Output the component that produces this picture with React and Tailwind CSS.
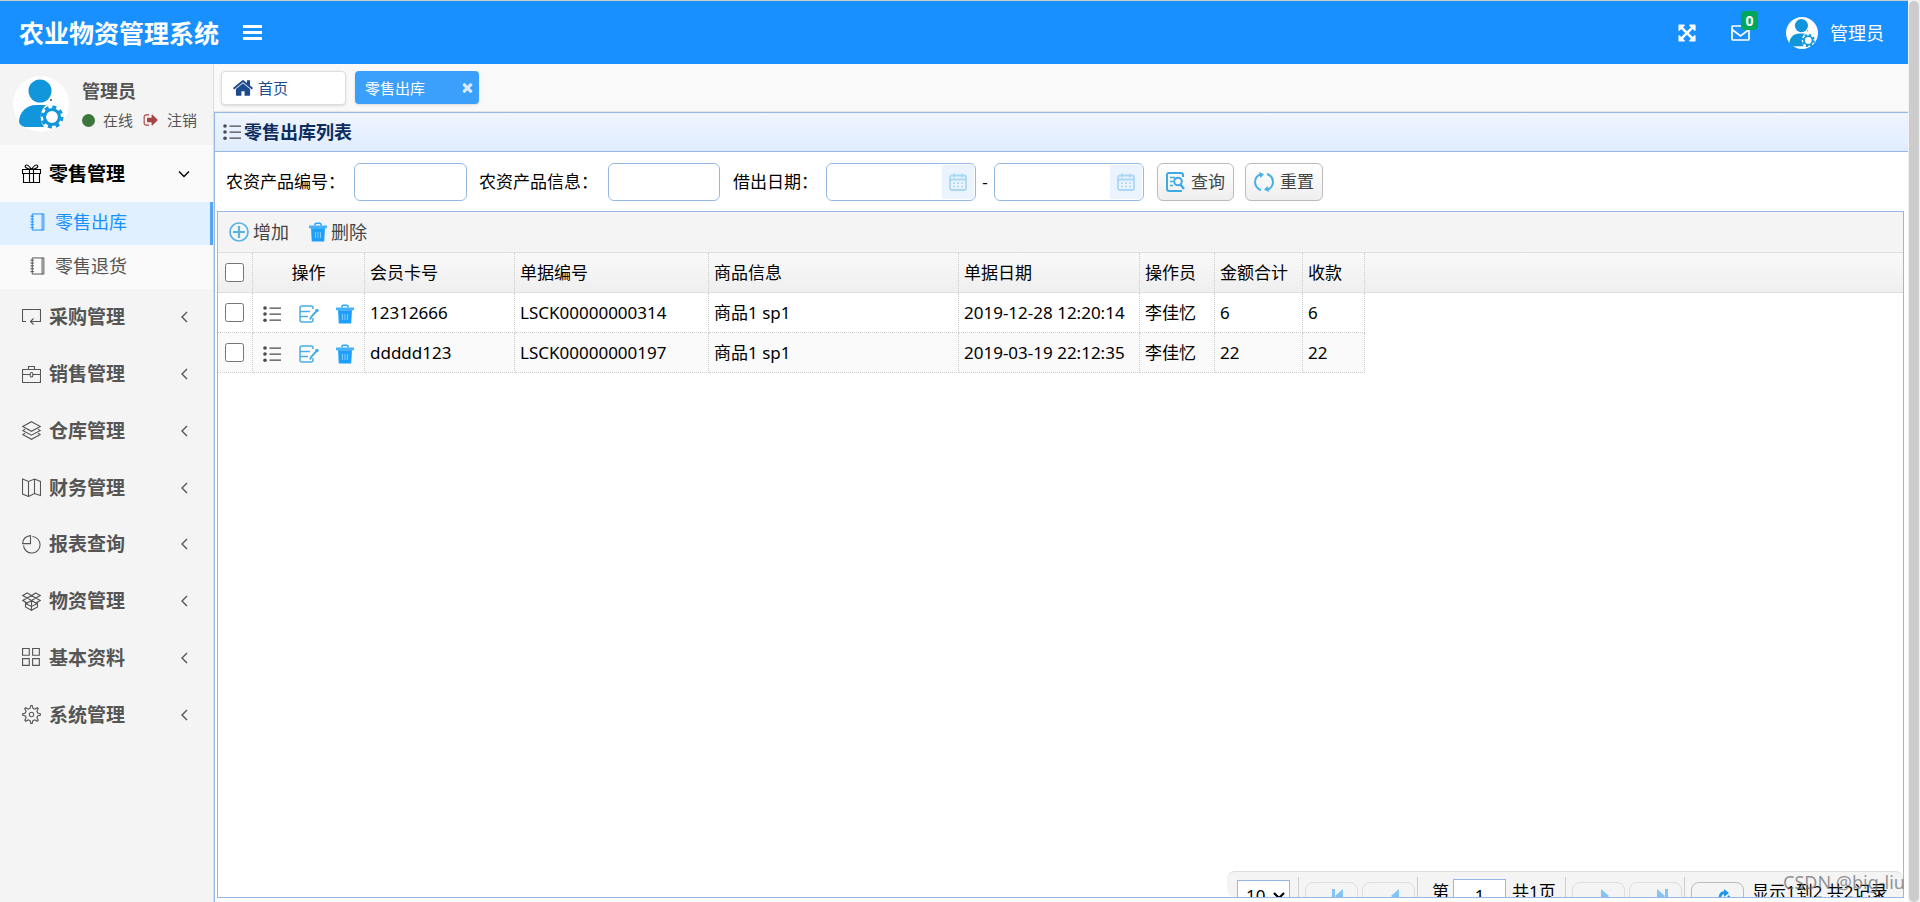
import React, { useState } from 'react';
import { TfiLayoutGrid2, TfiSettings } from 'react-icons/tfi';

const columns = ['会员卡号', '单据编号', '商品信息', '单据日期', '操作员', '金额合计', '收款'];

const rows = [
    ['12312666', 'LSCK00000000314', '商品1 sp1', '2019-12-28 12:20:14', '李佳忆', '6', '6'],
    ['ddddd123', 'LSCK00000000197', '商品1 sp1', '2019-03-19 22:12:35', '李佳忆', '22', '22'],
];

function Solid({ d, className }) {
    return (
        <svg viewBox="0 0 1792 1792" fill="currentColor" className={className} aria-hidden="true">
            <path d={d} />
        </svg>
    );
}

const HOME = 'M1472 992v480q0 26-19 45t-45 19h-384v-384h-256v384h-384q-26 0-45-19t-19-45v-480q0-1 .5-3t.5-3l575-474 575 474q1 2 1 6zm223-69l-62 74q-8 9-21 11h-3q-13 0-21-7l-692-577-692 577q-12 8-24 7-13-2-21-11l-62-74q-8-10-7-23.5t11-21.5l719-599q32-26 76-26t76 26l244 204v-195q0-14 9-23t23-9h192q14 0 23 9t9 23v408l219 182q10 8 11 21.5t-7 23.5z';
const SIGN_OUT = 'M704 1440q0 4 1 20t.5 26.5-3 23.5-10 19.5-20.5 6.5h-320q-119 0-203.5-84.5t-84.5-203.5v-704q0-119 84.5-203.5t203.5-84.5h320q13 0 22.5 9.5t9.5 22.5q0 4 1 20t.5 26.5-3 23.5-10 19.5-20.5 6.5h-320q-66 0-113 47t-47 113v704q0 66 47 113t113 47h312l11.5 1 11.5 3 8 5.5 7 9 2 13.5zm928-544q0 26-19 45l-544 544q-19 19-45 19t-45-19-19-45v-288h-448q-26 0-45-19t-19-45v-384q0-26 19-45t45-19h448v-288q0-26 19-45t45-19 45 19l544 544q19 19 19 45z';
const TIMES = 'M1490 1322q0 40-28 68l-136 136q-28 28-68 28t-68-28l-294-294-294 294q-28 28-68 28t-68-28l-136-136q-28-28-28-68t28-68l294-294-294-294q-28-28-28-68t28-68l136-136q28-28 68-28t68 28l294 294 294-294q28-28 68-28t68 28l136 136q28 28 28 68t-28 68l-294 294 294 294q28 28 28 68z';
const ARROWS = 'M1411 541l-355 355 355 355 144-144q29-31 70-14 39 17 39 59v448q0 26-19 45t-45 19h-448q-42 0-59-40-17-39 14-69l144-144-355-355-355 355 144 144q31 30 14 69-17 40-59 40h-448q-26 0-45-19t-19-45v-448q0-42 40-59 39-17 69 14l144 144 355-355-355-355-144 144q-19 19-45 19-12 0-24-5-40-17-40-59v-448q0-26 19-45t45-19h448q42 0 59 40 17 39-14 69l-144 144 355 355 355-355-144-144q-31-30-14-69 17-40 59-40h448q26 0 45 19t19 45v448q0 42-39 59-13 5-25 5-26 0-45-19z';

// thin outline icons on a 19px grid
function Line({ d, children, className = 'h-[19px] w-[19px]' }) {
    return (
        <svg viewBox="0 0 19 19" fill="none" stroke="currentColor" strokeWidth="1.1" className={className} aria-hidden="true">
            {d && <path d={d} />}
            {children}
        </svg>
    );
}

const GiftIcon = () => (
    <Line d="M.5 5.500h18v4H.5zM1.500 9.500v9h16v-9M7.500 5.500v13M11.500 5.500v13M9.500 5.500C7 1 4.500 .3 3.500 1.500S4 5 9.500 5.500C15 5 16.500 2.700 15.500 1.500S12 1 9.500 5.500" />
);
const ReturnIcon = () => (
    <Line d="M4 13.500H.5v-12h18v12h-10M11.500 10.500l-3 3 3 3" />
);
const CaseIcon = () => (
    <Line d="M.5 4.500h18v13H.5zM6.500 4.500v-3h6v3M.5 9.500H8M11 9.500h7.500">
        <rect x="8.200" y="7.500" width="2.600" height="4.500" rx="1.300" />
    </Line>
);
const LayersIcon = () => (
    <Line d="M9.500 .7L18.300 5.500 9.500 10.300.7 5.500zM3 8.200L.7 9.600l8.800 4.600 8.800-4.600L16 8.200M3 12.200L.7 13.600l8.800 4.700 8.800-4.700-2.300-1.400" />
);
const MapIcon = () => (
    <Line d="M.5 1L6.500 3.500l6-2.500 6 2.500v14l-6-2-6 3-6-2.500zM6.500 3.500v15M12.500 1v14.500" />
);
const PieIcon = () => (
    <Line d="M8.500 .6v8H.6Q1 1.500 8.500 .6zM10.500 1.500a8.300 8.300 0 1 1-9 9" />
);
const BoxesIcon = () => (
    <Line d="M5.200 1L9.500 3.500 5.200 6 .8 3.500zM13.800 1l4.400 2.500L13.800 6 9.500 3.500zM5.200 6l4.300 2.500-4.300 2.500L.8 8.500zM13.800 6l4.400 2.500-4.400 2.500-4.300-2.500zM3.500 10.500v4.500l6 3.300 6-3.300v-4.500M9.500 8.500v9.800M3.500 11.500l6 3 6-3" />
);

function BookIcon() {
    return (
        <Line className="h-[18px] w-[17px]" d="M2.500 .5h13v18h-13zM13.500 .5v18M.5 3h4M.5 6.200h4M.5 9.400h4M.5 12.600h4M.5 15.800h4" />
    );
}

const menus = [
    { name: '采购管理', Icon: ReturnIcon },
    { name: '销售管理', Icon: CaseIcon },
    { name: '仓库管理', Icon: LayersIcon },
    { name: '财务管理', Icon: MapIcon },
    { name: '报表查询', Icon: PieIcon },
    { name: '物资管理', Icon: BoxesIcon },
    { name: '基本资料', Icon: TfiLayoutGrid2 },
    { name: '系统管理', Icon: TfiSettings },
];

function Avatar({ className }) {
    return (
        <svg viewBox="0 0 56 56" className={className} aria-hidden="true">
            <circle cx="28" cy="28" r="28" fill="#fff" />
            <circle cx="27" cy="15" r="11.5" fill="#1296db" />
            <path d="M6 46c0-10 8-17 17-17h10c-5 5-8 12-2 22H12q-5-1-6-5z" fill="#1296db" />
            <circle cx="39" cy="41" r="11" fill="#fff" />
            <circle cx="39" cy="41" r="7.500" fill="none" stroke="#1296db" strokeWidth="3.200" />
            <circle cx="39" cy="41" r="10" fill="none" stroke="#1296db" strokeWidth="3" strokeDasharray="4 3.854" />
            <circle cx="38" cy="24" r="1" fill="#444" />
        </svg>
    );
}

function ListIcon({ className }) {
    return (
        <svg viewBox="0 0 18 18" className={className} aria-hidden="true">
            <g fill="#4a4a4a">
                <circle cx="2" cy="3" r="1.8" />
                <circle cx="2" cy="9" r="1.8" />
                <circle cx="2" cy="15.2" r="1.8" />
                <path d="M6.5 2.4H18v1.3H6.500zM6.500 8.400H18v1.300H6.500zM6.500 14.500H18v1.300H6.500z" />
            </g>
        </svg>
    );
}

function EditIcon({ className }) {
    return (
        <svg viewBox="0 0 20 18" fill="none" stroke="#49aee4" strokeWidth="1.5" className={className} aria-hidden="true">
            <path d="M14 4V3q0-2-2-2H3Q1 1 1 3v12q0 2 2 2h9q2 0 2-2v-2" />
            <path d="M1 6.500h10M1 11.500h8" />
            <path d="M18 5.500l-5.500 6-1.500 3" strokeWidth="2" />
            <circle cx="18" cy="5.500" r="1.800" fill="#49aee4" stroke="none" />
        </svg>
    );
}

function TrashIcon({ className }) {
    return (
        <svg viewBox="0 0 18 20" className={className} aria-hidden="true">
            <path d="M6 3.500V2.500q0-1.300 1.300-1.300h3.400q1.300 0 1.300 1.300v1" fill="none" stroke="#2ba6fb" strokeWidth="1.600" />
            <path d="M0 3.500h18v2.800H0z" fill="#46b2fb" />
            <path d="M2 6.300h14l-.8 13.200H2.800z" fill="#1ea0fa" />
            <path d="M6.500 10v6M9 10v6M11.500 10v6" stroke="#7cc8ff" strokeWidth="1.100" />
        </svg>
    );
}

function AddIcon({ className }) {
    return (
        <svg viewBox="0 0 20 20" fill="none" stroke="#58b4e0" className={className} aria-hidden="true">
            <circle cx="10" cy="10" r="9" strokeWidth="1.700" />
            <path d="M10 4v12M4 10h12" strokeWidth="2.200" />
        </svg>
    );
}

function CalendarIcon({ className }) {
    return (
        <svg viewBox="0 0 18 18" fill="none" stroke="#a9d8f5" className={className} aria-hidden="true">
            <rect x="1" y="2.500" width="16" height="14.500" rx="2" strokeWidth="1.800" />
            <path d="M1 6.500h16M5 .5v4M13 .5v4" strokeWidth="1.800" />
            <path d="M4 10.200h10M4 13.500h10" strokeWidth="1.500" strokeDasharray="2 2" />
        </svg>
    );
}

function SearchDocIcon({ className }) {
    return (
        <svg viewBox="0 0 19 20" fill="none" stroke="#3fa9e2" strokeWidth="2" className={className} aria-hidden="true">
            <path d="M17 5V3q0-2-2-2H3Q1 1 1 3v14q0 2 2 2h13" />
            <path d="M4 5.500h5M4 9.500h3M4 13.500h3" strokeWidth="1.500" />
            <circle cx="12" cy="9.500" r="3.800" />
            <path d="M14.500 12.500l3.500 4.500" strokeWidth="2.400" />
        </svg>
    );
}

function ResetIcon({ className }) {
    return (
        <svg viewBox="0 0 20 20" fill="none" stroke="#49b0e6" strokeWidth="2" className={className} aria-hidden="true">
            <path d="M7 18q-6-2-6-8.500Q1.500 4 7 2.300M13 2q6 2 6 8.500-.5 5.500-6 7.200" />
            <path d="M5 0l5 2.300-3.500 3.700zM15 20l-5-2.300 3.500-3.700z" fill="#49b0e6" stroke="none" />
        </svg>
    );
}

function Chevron({ open }) {
    return (
        <svg viewBox="0 0 12 12" fill="none" stroke="currentColor" strokeWidth="1.400" className="h-3 w-3" aria-hidden="true">
            <path d={open ? 'M1 3.500l5 5 5-5' : 'M9 1l-5 5 5 5'} />
        </svg>
    );
}

function PagerButton({ label, d, active }) {
    return (
        <button
            aria-label={label}
            className={`mt-[10px] flex h-[38px] w-[53px] shrink-0 justify-center rounded-lg border pt-[6px] pl-3 ${active ? 'border-[#bbb]' : 'border-[#ddd]'}`}
        >
            <svg viewBox="0 0 14 14" fill={active ? '#2196e8' : '#83c4f4'} className="h-[14px] w-[14px]" aria-hidden="true">
                <path d={d} />
            </svg>
        </button>
    );
}

function Separator() {
    return <div className="mx-[2px] mt-[5px] h-8 w-px shrink-0 bg-[#ccc]" />;
}

function Header() {
    return (
        <header className="flex h-16 shrink-0 items-center border-t border-[#ccc] bg-[#1890ff] px-[19px] text-white">
            <h1 className="text-[25px] leading-8 font-bold">农业物资管理系统</h1>
            <button aria-label="菜单" className="ml-6 flex w-[19px] flex-col gap-[3px]">
                <span className="h-[3px] w-full bg-white" />
                <span className="h-[3px] w-full bg-white" />
                <span className="h-[3px] w-full bg-white" />
            </button>
            <div className="ml-auto flex items-center">
                <button aria-label="全屏">
                    <Solid d={ARROWS} className="h-5 w-5" />
                </button>
                <button aria-label="消息" className="relative ml-[34px]">
                    <svg viewBox="0 0 19 16" fill="none" stroke="currentColor" strokeWidth="1.700" className="h-4 w-[19px]" aria-hidden="true">
                        <rect x="1" y="1" width="17" height="14" rx="1" />
                        <path d="M1 4.500l8.500 6.500L18 4.500" />
                    </svg>
                    <span className="absolute -top-[14px] left-[10px] h-[19px] w-[17px] rounded bg-[#00a65a] text-center text-[14px] leading-[19px] font-bold">0</span>
                </button>
                <Avatar className="ml-9 h-8 w-8" />
                <span className="mr-[5px] ml-3 text-[18px]">管理员</span>
            </div>
        </header>
    );
}

function Sidebar() {
    return (
        <aside className="flex w-[214px] shrink-0 flex-col border-r border-[#ddd] bg-[#f4f4f4] text-[#555]">
            <div className="flex h-[81px] shrink-0 pt-3 pl-[13px]">
                <Avatar className="h-14 w-14" />
                <div className="ml-[13px]">
                    <div className="text-[18px] leading-[30px] font-bold">管理员</div>
                    <div className="flex h-7 items-center text-[15px]">
                        <span className="h-[13px] w-[13px] rounded-full bg-[#3c763d]" />
                        <span className="ml-2">在线</span>
                        <Solid d={SIGN_OUT} className="ml-[10px] h-4 w-4 text-[#a94442]" />
                        <a href="#logout" className="ml-2">注销</a>
                    </div>
                </div>
            </div>
            <nav>
                <div className="bg-[#fafafa]">
                    <button className="flex h-[57px] w-full items-center pr-[23px] pl-[22px] text-black">
                        <GiftIcon />
                        <span className="ml-2 flex-1 text-left text-[19px] font-bold">零售管理</span>
                        <Chevron open />
                    </button>
                    <a href="#out" className="flex h-[43px] items-center border-r-[3px] border-[#57a5f2] bg-[#e0f0ff] pb-[3px] pl-[30px] text-[18px] text-[#1890ff]">
                        <BookIcon />
                        <span className="ml-2">零售出库</span>
                    </a>
                    <a href="#return" className="flex h-11 items-center pb-[3px] pl-[30px] text-[18px]">
                        <BookIcon />
                        <span className="ml-2">零售退货</span>
                    </a>
                </div>
                <div className="flex h-[454px] flex-col">
                    {menus.map(({ name, Icon }) => (
                        <button key={name} className="flex w-full flex-1 items-center pr-[23px] pl-[22px]">
                            <Icon className="h-[19px] w-[19px]" />
                            <span className="ml-2 flex-1 text-left text-[19px] font-bold">{name}</span>
                            <Chevron />
                        </button>
                    ))}
                </div>
            </nav>
        </aside>
    );
}

function Tabs() {
    return (
        <div className="flex h-12 shrink-0 gap-[9px] border-b border-[#e5e5e5] bg-[#f9f9f9] pt-[7px] pl-[7px] text-[15px]">
            <button className="flex h-[34px] w-[125px] items-center rounded border border-[#ddd] bg-white pl-[10px] text-[#1d4b8f] shadow-sm">
                <Solid d={HOME} className="h-[22px] w-[22px]" />
                <span className="ml-1">首页</span>
            </button>
            <button className="flex h-[33px] w-[124px] items-center justify-between rounded bg-[#3b9ffc] pr-1 pl-[10px] text-white shadow-sm">
                零售出库
                <Solid d={TIMES} className="h-[15px] w-[15px] opacity-80" />
            </button>
        </div>
    );
}

function DateBox({ id, label }) {
    return (
        <div className="flex h-[38px] w-[150px] rounded-md border border-[#95b8e7] bg-white p-px">
            <input id={id} aria-label={label} className="w-0 flex-1 rounded-md px-1 outline-none" />
            <button type="button" aria-label="选择日期" className="flex w-8 items-center justify-center bg-[#ebf3ff]">
                <CalendarIcon className="h-[18px] w-[18px]" />
            </button>
        </div>
    );
}

function SearchForm() {
    return (
        <form className="flex h-[59px] shrink-0 items-center pl-[11px]" onSubmit={(e) => e.preventDefault()}>
            <label htmlFor="code" className="w-32">农资产品编号：</label>
            <input id="code" className="h-[38px] w-[113px] rounded-md border border-[#95b8e7] px-1" />
            <label htmlFor="info" className="ml-3 w-[129px]">农资产品信息：</label>
            <input id="info" className="h-[38px] w-[112px] rounded-md border border-[#95b8e7] px-1" />
            <label htmlFor="from" className="ml-[13px] w-[93px]">借出日期：</label>
            <DateBox id="from" label="开始日期" />
            <span className="w-[18px] text-center">-</span>
            <DateBox id="to" label="结束日期" />
            <button className="ml-[13px] flex h-[38px] w-[77px] items-center justify-center gap-[6px] rounded-md border border-[#bbb] bg-linear-to-b from-white to-[#eee] text-[#444]">
                <SearchDocIcon className="h-5 w-[19px]" />
                查询
            </button>
            <button type="reset" className="ml-[11px] flex h-[38px] w-[78px] items-center justify-center gap-[6px] rounded-md border border-[#bbb] bg-linear-to-b from-white to-[#eee] text-[#444]">
                <ResetIcon className="h-5 w-5" />
                重置
            </button>
        </form>
    );
}

function DataGrid() {
    const [checked, setChecked] = useState([false, false]);
    const all = checked.every(Boolean);

    const toggle = (i) => setChecked(checked.map((c, n) => (n === i ? !c : c)));

    return (
        <div className="h-[41px] border-y border-[#ddd] bg-linear-to-b from-[#f9f9f9] to-[#efefef]">
            <table className="w-[1147px] table-fixed border-separate border-spacing-0">
                <colgroup>
                    <col className="w-[35px]" />
                    <col className="w-[112px]" />
                    <col className="w-[150px]" />
                    <col className="w-[194px]" />
                    <col className="w-[250px]" />
                    <col className="w-[181px]" />
                    <col className="w-[75px]" />
                    <col className="w-[88px]" />
                    <col className="w-[62px]" />
                </colgroup>
                <thead>
                    <tr className="h-10">
                        <th className="border-r border-b border-r-[#ccc] border-b-[#ddd] p-0 [border-right-style:dotted]">
                            <input
                                type="checkbox"
                                aria-label="全选"
                                checked={all}
                                onChange={() => setChecked(checked.map(() => !all))}
                                className="ml-[7px] block h-[19px] w-[19px]"
                            />
                        </th>
                        <th className="border-r border-b border-r-[#ccc] border-b-[#ddd] p-0 font-normal [border-right-style:dotted]">操作</th>
                        {columns.map((c) => (
                            <th key={c} className="border-r border-b border-r-[#ccc] border-b-[#ddd] p-0 pl-[5px] text-left font-normal [border-right-style:dotted]">{c}</th>
                        ))}
                    </tr>
                </thead>
                <tbody>
                    {rows.map((row, i) => (
                        <tr key={row[1]} className={`h-10 ${i % 2 ? 'bg-[#fafafa]' : 'bg-white'}`}>
                            <td className="border-r border-b border-dotted border-[#ccc] p-0">
                                <input
                                    type="checkbox"
                                    aria-label={row[1]}
                                    checked={checked[i]}
                                    onChange={() => toggle(i)}
                                    className="ml-[7px] block h-[19px] w-[19px]"
                                />
                            </td>
                            <td className="border-r border-b border-dotted border-[#ccc] p-0">
                                <div className="flex items-center justify-between px-[10px] pt-[2px]">
                                    <button aria-label="查看"><ListIcon className="block h-[18px] w-[18px]" /></button>
                                    <button aria-label="编辑"><EditIcon className="block h-[18px] w-5" /></button>
                                    <button aria-label="删除"><TrashIcon className="block h-5 w-[18px]" /></button>
                                </div>
                            </td>
                            {row.map((v, n) => (
                                <td key={n} className="truncate border-r border-b border-dotted border-[#ccc] p-0 pl-[5px]">{v}</td>
                            ))}
                        </tr>
                    ))}
                </tbody>
            </table>
        </div>
    );
}

function Pager() {
    return (
        <div className="relative h-[26px] w-[676px] shrink-0 self-end">
            <div className="flex h-full overflow-hidden rounded-l-lg rounded-tr-lg border-t border-[#ddd] bg-[#f4f4f4] pl-[10px]">
                <div className="relative mt-2 h-8 w-[53px] shrink-0">
                    <select aria-label="每页条数" className="h-full w-full appearance-none border border-[#95b8e7] bg-white pl-2" defaultValue="10">
                        <option>10</option>
                        <option>20</option>
                    </select>
                    <svg viewBox="0 0 12 8" fill="none" stroke="#000" strokeWidth="2.200" className="pointer-events-none absolute top-3 right-[5px] h-2 w-3" aria-hidden="true">
                        <path d="M1 1l5 5 5-5" />
                    </svg>
                </div>
                <div className="w-[6px] shrink-0" />
                <Separator />
                <div className="flex shrink-0 gap-[4px] pl-1">
                    <PagerButton label="首页" d="M1 0h3v14H1zM12 0v14L4 7z" />
                    <PagerButton label="上一页" d="M11 0v14L3 7z" />
                </div>
                <Separator />
                <label htmlFor="page" className="mt-[5px] ml-3 w-[21px] shrink-0 leading-[30px]">第</label>
                <input id="page" defaultValue="1" className="mt-[7px] h-8 w-[53px] shrink-0 border border-[#95b8e7] bg-white text-center" />
                <span className="mt-[5px] ml-[6px] w-[51px] shrink-0 leading-[30px]">共1页</span>
                <Separator />
                <div className="flex shrink-0 gap-[4px] pl-1">
                    <PagerButton label="下一页" d="M3 0v14l8-7z" />
                    <PagerButton label="末页" d="M2 0v14l8-7zM10 0h3v14h-3z" />
                </div>
                <Separator />
                <div className="shrink-0 pl-1">
                    <PagerButton label="刷新" active d="M2 14Q0 3 7 2V0l5 4-5 4V5Q3 6 4 14zM12 6q3 4 0 8h-2q2-3 0-6z" />
                </div>
                <span className="mt-[5px] ml-2 shrink-0 leading-[30px]">显示1到2 共2记录</span>
            </div>
            <span className="absolute -right-[2px] top-[1px] font-['Noto_Sans'] text-[18px] leading-5 text-[#666]/70">CSDN @big-liu</span>
        </div>
    );
}

export default function App() {
    return (
        <div className="flex h-screen bg-[#f1f1f1] font-['Noto_Sans','Noto_Sans_CJK_SC',sans-serif] text-[17px] leading-6 text-black">
            <div className="flex min-w-0 flex-1 flex-col">
                <Header />
                <div className="flex min-h-0 flex-1">
                    <Sidebar />
                    <main className="flex min-w-0 flex-1 flex-col bg-white">
                        <Tabs />
                        <section className="flex min-h-0 flex-1 flex-col border-t border-l border-[#95b8e7]">
                            <div className="flex h-[39px] shrink-0 items-center border-b border-[#95b8e7] bg-linear-to-b from-[#eff5ff] to-[#e0ecff] pl-2">
                                <ListIcon className="h-[18px] w-[18px]" />
                                <h2 className="ml-[3px] text-[18px] font-bold text-[#0e2d5f]">零售出库列表</h2>
                            </div>
                            <SearchForm />
                            <div className="mr-1 mb-1 ml-[2px] flex min-h-0 flex-1 flex-col border border-[#95b8e7]">
                                <div className="flex h-10 shrink-0 items-center bg-[#f4f4f4] pl-[11px] text-[18px] text-[#444]">
                                    <button className="flex items-center gap-1">
                                        <AddIcon className="h-5 w-5" />
                                        增加
                                    </button>
                                    <button className="ml-5 flex items-center gap-1">
                                        <TrashIcon className="h-5 w-[18px]" />
                                        删除
                                    </button>
                                </div>
                                <DataGrid />
                                <div className="flex-1" />
                                <Pager />
                            </div>
                        </section>
                    </main>
                </div>
            </div>
            <div className="flex w-3 shrink-0 pt-px pr-px pl-px">
                <div className="flex-1 rounded-full bg-[#ccc]" />
            </div>
        </div>
    );
}
